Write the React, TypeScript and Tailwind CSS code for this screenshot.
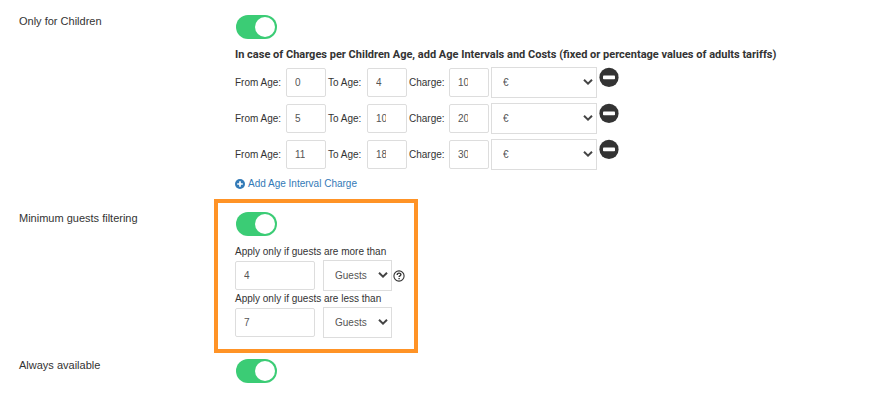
import { useId, useState } from "react";
import type { ReactNode } from "react";

const intervals = [
  { from: 0, to: 4, charge: 10 },
  { from: 5, to: 10, charge: 20 },
  { from: 11, to: 18, charge: 30 },
];

const fieldClass =
  "rounded-xs border border-[#dddddd] bg-white text-[10px] text-[#555555] outline-none [&::-webkit-inner-spin-button]:appearance-none";

function Toggle({ id }: { id: string }) {
  const [checked, setChecked] = useState(true);

  return (
    <input
      id={id}
      type="checkbox"
      role="switch"
      checked={checked}
      onChange={() => setChecked(!checked)}
      className="ml-px flex h-6 w-[41px] cursor-pointer appearance-none items-center rounded-full bg-gray-300 px-[2px] before:size-5 before:rounded-full before:bg-white checked:justify-end checked:bg-[#3bcc75]"
    />
  );
}

function Select({
  label,
  options,
  className,
}: {
  label: string;
  options: string[];
  className: string;
}) {
  return (
    <div className={`relative shrink-0 ${className}`}>
      <select
        aria-label={label}
        className="block h-[31px] w-full appearance-none border border-[#dddddd] bg-white pr-5 pl-[11px] text-[10px] text-[#555555] outline-none"
      >
        {options.map((option) => (
          <option key={option}>{option}</option>
        ))}
      </select>
      <svg
        viewBox="0 0 10 6"
        className="pointer-events-none absolute top-3 right-1 h-[6px] w-[10px]"
        fill="none"
        stroke="#444444"
        strokeWidth="2"
      >
        <path d="M1 0.8 5 4.6 9 0.8" />
      </svg>
    </div>
  );
}

function AgeField({
  label,
  value,
  labelClass,
}: {
  label: string;
  value: number;
  labelClass: string;
}) {
  return (
    <label className="flex items-center gap-[3px]">
      <span className={`whitespace-nowrap ${labelClass}`}>{label}</span>
      <input
        type="number"
        defaultValue={value}
        className={`h-[29px] w-10 pr-5 pl-2 ${fieldClass}`}
      />
    </label>
  );
}

function GuestLimit({
  label,
  value,
  children,
}: {
  label: string;
  value: number;
  children?: ReactNode;
}) {
  const id = useId();

  return (
    <div>
      <label htmlFor={id} className="block leading-4 whitespace-nowrap">
        {label}
      </label>
      <div className="flex items-center">
        <input
          id={id}
          type="number"
          defaultValue={value}
          className={`mr-2 h-[29px] w-20 shrink-0 px-2 ${fieldClass}`}
        />
        <Select label={label} options={["Guests", "Adults"]} className="w-[69px]" />
        {children}
      </div>
    </div>
  );
}

function HelpIcon() {
  return (
    <svg viewBox="0 0 12 12" className="ml-px size-3 shrink-0" fill="none" stroke="#333333">
      <circle cx="6" cy="6" r="5.1" strokeWidth="1.1" />
      <path d="M4.2 4.9c0-2.4 3.7-2.2 3.7-.3 0 1.2-1.8 1.2-1.8 2.4" strokeWidth="1.4" />
      <path d="M6.1 7.9v1.3" strokeWidth="1.4" />
    </svg>
  );
}

export default function App() {
  return (
    <main className="grid grid-cols-[214px_1fr] bg-white font-['Liberation_Sans',Arial,sans-serif] text-[10px] text-[#333333]">
      {/* Children */}
      <label htmlFor="children" className="pt-[13px] pl-[19px] text-[11px] leading-4">
        Only for Children
      </label>
      <section className="px-[21px] pt-[15px] pb-[7px]">
        <Toggle id="children" />
        <h2 className="mt-2 font-[Roboto,sans-serif] text-[11px] leading-4 font-bold">
          In case of Charges per Children Age, add Age Intervals and Costs (fixed or percentage
          values of adults tariffs)
        </h2>

        <div className="mt-1 flex flex-col gap-[5px]">
          {intervals.map((interval) => (
            <div key={interval.from} className="flex items-center gap-[2px]">
              <AgeField label="From Age:" value={interval.from} labelClass="w-12" />
              <AgeField label="To Age:" value={interval.to} labelClass="w-9" />
              <AgeField label="Charge:" value={interval.charge} labelClass="w-[37px]" />
              <Select label="Charge unit" options={["€", "%"]} className="w-[106px]" />
              <button type="button" aria-label="Remove interval" className="self-start">
                <svg viewBox="0 0 20 20" className="size-5">
                  <circle cx="10" cy="10.4" r="9.6" fill="#333333" />
                  <rect x="4" y="8.4" width="12" height="3.8" rx="0.8" fill="white" />
                </svg>
              </button>
            </div>
          ))}
        </div>

        <a href="#add" className="mt-[6px] flex items-center gap-[3px] leading-4 text-[#337ab7]">
          <svg viewBox="0 0 10 10" className="size-[10px]">
            <circle cx="5" cy="5" r="5" fill="currentColor" />
            <path d="M5 2.2v5.6M2.2 5h5.6" stroke="white" strokeWidth="1.7" />
          </svg>
          Add Age Interval Charge
        </a>
      </section>

      {/* Guests */}
      <label htmlFor="guests" className="pt-[11px] pl-[19px] text-[11px] leading-4">
        Minimum guests filtering
      </label>
      <section className="w-[204px] border-4 border-[#ff9326] px-[17px] pt-[9px] pb-[11px]">
        <Toggle id="guests" />
        <div className="mt-2">
          <GuestLimit label="Apply only if guests are more than" value={4}>
            <HelpIcon />
          </GuestLimit>
          <GuestLimit label="Apply only if guests are less than" value={7} />
        </div>
      </section>

      {/* Availability */}
      <label htmlFor="available" className="pt-1 pl-[19px] text-[11px] leading-4">
        Always available
      </label>
      <section className="px-[21px] pt-[6px]">
        <Toggle id="available" />
      </section>
    </main>
  );
}
